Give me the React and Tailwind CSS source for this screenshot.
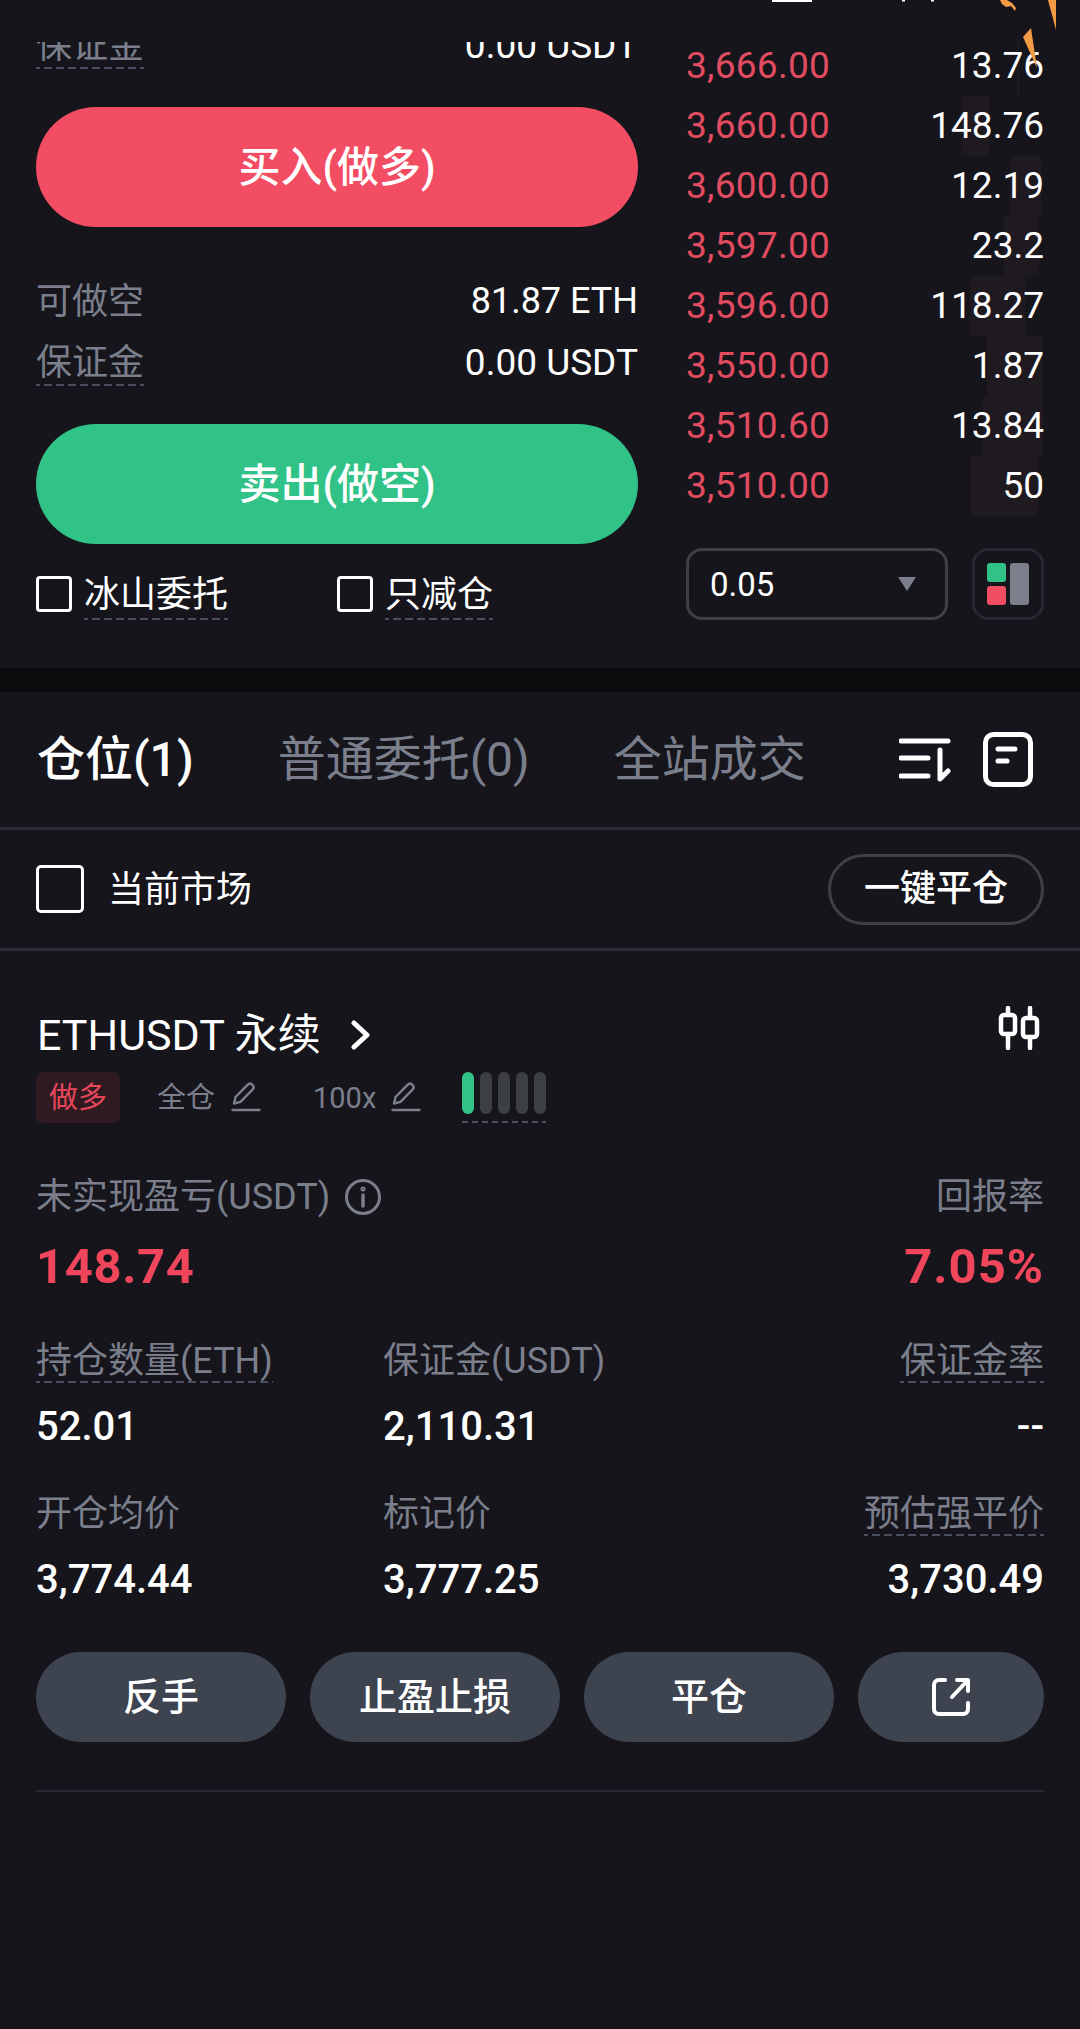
const CJK = "font-['Roboto','Noto_Sans_CJK_SC',sans-serif]";

const asks = [
  { price: "3,666.00", size: "13.76", bar: "w-[2px] mr-[25px]" },
  { price: "3,660.00", size: "148.76", bar: "w-[28px] mr-[55px]" },
  { price: "3,600.00", size: "12.19", bar: "w-[31px] mr-[3px]" },
  { price: "3,597.00", size: "23.2", bar: "w-[35px] mr-[5px]" },
  { price: "3,596.00", size: "118.27", bar: "w-[55px] mr-[19px]" },
  { price: "3,550.00", size: "1.87", bar: "w-[56px] mr-[1px]" },
  { price: "3,510.60", size: "13.84", bar: "w-[60px] mr-[1px]" },
  { price: "3,510.00", size: "50", bar: "w-[67px] mr-[6px]" },
];

function Dashed({ children, className = "" }) {
  return (
    <span className={`inline-block bg-[repeating-linear-gradient(to_right,#4a4f60_0,#4a4f60_4px,transparent_4px,transparent_8px,#4a4f60_8px,#4a4f60_12px)] bg-[length:100%_2px] bg-bottom bg-no-repeat ${className}`}>
      {children}
    </span>
  );
}

function Pencil() {
  return (
    <svg width="30" height="30" viewBox="0 0 30 30" fill="none" stroke="#7b7f8c" strokeWidth="2.4" strokeLinecap="round" strokeLinejoin="round">
      <path d="M3 21.5 L4.5 15 L16.5 2.8 C18 1.4 20 1.4 21.5 2.8 C23 4.2 23 6.2 21.5 7.7 L9.5 19.8 Z" />
      <path d="M1.5 28 H28.5" />
    </svg>
  );
}

function Stat({ label, value, dashed, align = "left" }) {
  return (
    <div className={`flex flex-col ${align === "right" ? "items-end" : "items-start"}`}>
      <div className="h-[46px] text-[36px] leading-[46px] text-[#7b7f8c]">
        {dashed ? <Dashed className="h-[45px] leading-[46px]">{label}</Dashed> : label}
      </div>
      <div className="mt-[20px] h-[46px] text-[40px] leading-[46px] font-medium text-white">{value}</div>
    </div>
  );
}

function ActionButton({ children, className = "" }) {
  return (
    <button className={`flex h-[90px] items-center justify-center rounded-full bg-[#3e4350] text-[38px] font-medium text-white ${className}`}>
      {children}
    </button>
  );
}

export default function App() {
  return (
    <div className={`relative h-[2029px] w-[1080px] overflow-hidden bg-[#16151c] ${CJK}`}>
      {/* bits of the chart's marker and toolbar that show above the scrolled panel */}
      <svg className="absolute left-0 top-0" width="1080" height="72" viewBox="0 0 1080 72">
        <rect x="772" y="0" width="40" height="2" fill="#fff" />
        <rect x="902" y="0" width="3" height="1.5" fill="#fff" />
        <rect x="931" y="0" width="3" height="1.5" fill="#fff" />
        <path d="M1000 0 L1007 0 L1012 3 L1016 8 L1015 11 L1011 6 L1006 7 L1002 4 Z" fill="#f39a44" />
        <path d="M1048 0 L1056 0 L1056 30 Z" fill="#f39a44" />
      </svg>

      <div className="flex h-[668px] px-[36px]">
        <div className="flex w-[602px] flex-col">
          <div className="relative mt-[42px] h-[30px] overflow-hidden text-[36px] text-[#7b7f8c]">
            <div className="absolute inset-x-0 top-[-20px] flex items-start justify-between">
              <Dashed className="h-[47px] leading-[48px]">保证金</Dashed>
              <span className="text-[37px] leading-[48px] text-white">0.00 USDT</span>
            </div>
          </div>
          <button className="mt-[35px] h-[120px] shrink-0 rounded-full bg-[#f34d63] text-[42px] font-medium text-white">买入(做多)</button>
          <div className="mt-[50px] flex h-[46px] items-center justify-between text-[36px]">
            <span className="pt-[3px] text-[#7b7f8c]">可做空</span>
            <span className="pt-[1px] text-white">81.87 ETH</span>
          </div>
          <div className="mt-[16px] flex h-[46px] items-start justify-between text-[36px]">
            <Dashed className="h-[47px] leading-[48px] text-[#7b7f8c]">保证金</Dashed>
            <span className="text-[37px] leading-[48px] text-white">0.00 USDT</span>
          </div>
          <button className="mt-[39px] h-[120px] shrink-0 rounded-full bg-[#31c288] text-[42px] font-medium text-white">卖出(做空)</button>
          <div className="mt-[32px] flex h-[44px] items-start text-[36px] text-white">
            <span className="h-[36px] w-[36px] rounded-[4px] border-[3px] border-white" />
            <Dashed className="ml-[12px] h-[44px] leading-[38px]">冰山委托</Dashed>
            <span className="ml-[109px] h-[36px] w-[36px] rounded-[4px] border-[3px] border-white" />
            <Dashed className="ml-[12px] h-[44px] leading-[38px]">只减仓</Dashed>
          </div>
        </div>

        <div className="ml-[48px] flex w-[358px] flex-col pt-[36px]">
          {asks.map((row) => (
            <div key={row.price} className="relative flex h-[60px] items-center justify-between text-[37px]">
              <span className={`absolute right-0 top-0 h-[60px] bg-[#1f1920] ${row.bar}`} />
              <span className="relative tracking-[0.3px] text-[#e24c60]">{row.price}</span>
              <span className="relative text-white">{row.size}</span>
            </div>
          ))}
          <div className="mt-[32px] flex items-start justify-between">
            <div className="flex h-[72px] w-[262px] items-center justify-between rounded-[16px] border-[3px] border-[#3f4045] pl-[21px] pr-[29px] text-[33px] text-white">
              <span className="pt-[1px]">0.05</span>
              <span className="h-[14px] w-[18px] bg-[#7b7f8c] [clip-path:polygon(0_0,100%_0,50%_100%)]" />
            </div>
            <div className="grid h-[72px] w-[72px] grid-cols-[19px_19px] grid-rows-[19px_19px] content-center justify-center gap-[4px] rounded-[16px] border-[3px] border-[#262833]">
              <span className="rounded-[3px] bg-[#31c288]" />
              <span className="row-span-2 rounded-[3px] bg-[#7b7f8c]" />
              <span className="rounded-[3px] bg-[#f34d63]" />
            </div>
          </div>
        </div>
      </div>

      <div className="h-[24px] bg-[#0b0b0d]" />

      <div className="flex h-[138px] items-center border-b-[3px] border-[#2a2b35] px-[36px] text-[48px]">
        <span className="ml-[1px] font-medium text-white">仓位(1)</span>
        <span className="ml-[84px] text-[#7b7f8c]">普通委托(0)</span>
        <span className="ml-[84px] text-[#7b7f8c]">全站成交</span>
        <svg className="ml-[93px]" width="52" height="44" viewBox="0 0 52 44" fill="none" stroke="#fff" strokeWidth="5" strokeLinecap="round" strokeLinejoin="round">
          <path d="M2 3 H49" />
          <path d="M2 20 H29" />
          <path d="M2 38 H29" />
          <path d="M41 12 V41 L49 33" />
        </svg>
        <svg className="ml-[32px]" width="50" height="55" viewBox="0 0 50 55" fill="none" stroke="#fff" strokeWidth="5" strokeLinecap="round">
          <rect x="2.5" y="2.5" width="45" height="50" rx="8" />
          <path d="M15 17 H32" />
          <path d="M15 29 H24" />
        </svg>
      </div>

      <div className="flex h-[121px] items-center justify-between border-b-[3px] border-[#2a2b35] px-[36px]">
        <div className="flex items-center text-[36px] text-white">
          <span className="h-[48px] w-[48px] rounded-[5px] border-[3px] border-white" />
          <span className="ml-[24px] pt-[1px]">当前市场</span>
        </div>
        <button className="flex h-[71px] w-[216px] items-center justify-center rounded-full border-[3px] border-[#3f4045] text-[36px] font-medium text-white">一键平仓</button>
      </div>

      <div className="px-[36px] pt-[55px]">
        <div className="flex items-center justify-between">
          <div className="flex h-[58px] items-center text-[43px] text-white">
            <span className="ml-[1px]">ETHUSDT 永续</span>
            <svg className="ml-[29px]" width="20" height="30" viewBox="0 0 20 30" fill="none" stroke="#fff" strokeWidth="5" strokeLinecap="round" strokeLinejoin="round">
              <path d="M4 3 L17 15 L4 27" />
            </svg>
          </div>
          <svg className="mr-[3px] -mt-[14px]" width="44" height="44" viewBox="0 0 44 44" fill="none" stroke="#fff" strokeWidth="4.5" strokeLinecap="round">
            <rect x="4" y="9" width="14" height="19" rx="3" />
            <rect x="26" y="12" width="14" height="19" rx="3" />
            <path d="M11 2 V9 M11 28 V42 M33 2 V12 M33 31 V42" />
          </svg>
        </div>

        <div className="mt-[7px] flex h-[52px] items-center text-[29px] text-[#7b7f8c]">
          <span className="flex h-[51px] w-[84px] items-center justify-center rounded-[6px] bg-[#2f1a22] pt-[3px] text-[#e8475b]">做多</span>
          <span className="ml-[37px] pt-[4px]">全仓</span>
          <span className="ml-[16px]"><Pencil /></span>
          <span className="ml-[52px] pt-[4px]">100x</span>
          <span className="ml-[15px]"><Pencil /></span>
          <span className="ml-[41px] flex h-[51px] w-[84px] items-start gap-[6px] bg-[repeating-linear-gradient(to_right,#4a4f60_0,#4a4f60_6px,transparent_6px,transparent_10px)] bg-[length:100%_2px] bg-bottom bg-no-repeat">
            <span className="h-[42px] w-[12px] rounded-full bg-[#31c288]" />
            <span className="h-[42px] w-[12px] rounded-full bg-[#3c3f44]" />
            <span className="h-[42px] w-[12px] rounded-full bg-[#3c3f44]" />
            <span className="h-[42px] w-[12px] rounded-full bg-[#3c3f44]" />
            <span className="h-[42px] w-[12px] rounded-full bg-[#3c3f44]" />
          </span>
        </div>

        <div className="mt-[51px] flex justify-between">
          <div>
            <div className="flex h-[46px] items-center text-[36px] text-[#7b7f8c]">
              未实现盈亏(USDT)
              <svg className="ml-[14px]" width="38" height="38" viewBox="0 0 38 38" fill="none" stroke="#7b7f8c" strokeWidth="3" strokeLinecap="round">
                <circle cx="19" cy="19" r="16.5" />
                <path d="M19 17 V28" strokeWidth="3.5" />
                <circle cx="19" cy="11" r="1" strokeWidth="3" />
              </svg>
            </div>
            <div className="mt-[19px] text-[49px] leading-[56px] font-bold tracking-[0.6px] text-[#f0465b]">148.74</div>
          </div>
          <div className="text-right">
            <div className="h-[46px] text-[36px] leading-[46px] text-[#7b7f8c]">回报率</div>
            <div className="mt-[19px] text-[49px] leading-[56px] font-bold tracking-[1px] text-[#f0465b]">7.05%</div>
          </div>
        </div>

        <div className="mt-[43px] grid grid-cols-[347px_1fr_auto] gap-y-[41px]">
          <Stat label="持仓数量(ETH)" value="52.01" dashed />
          <Stat label="保证金(USDT)" value="2,110.31" />
          <Stat label="保证金率" value="--" dashed align="right" />
          <Stat label="开仓均价" value="3,774.44" />
          <Stat label="标记价" value="3,777.25" />
          <Stat label="预估强平价" value="3,730.49" dashed align="right" />
        </div>

        <div className="mt-[49px] flex gap-[24px]">
          <ActionButton className="w-[250px]">反手</ActionButton>
          <ActionButton className="w-[250px]">止盈止损</ActionButton>
          <ActionButton className="w-[250px]">平仓</ActionButton>
          <ActionButton className="w-[186px]">
            <svg width="40" height="40" viewBox="0 0 40 40" fill="none" stroke="#fff" strokeWidth="4" strokeLinecap="round" strokeLinejoin="round">
              <path d="M14 3 H8 C5 3 3 5 3 8 V32 C3 35 5 37 8 37 H32 C35 37 37 35 37 32 V26" />
              <path d="M21 20 L37 3 M26 3 H37 V14" />
            </svg>
          </ActionButton>
        </div>

        <div className="mt-[48px] h-[2px] bg-[#2a2a36]" />
      </div>

      {/* orange marker from the chart that hangs over the order book */}
      <svg className="absolute left-[1020px] top-[26px]" width="20" height="44" viewBox="0 0 20 44">
        <path d="M11 2 L3 11 L17 42 Z" fill="#f39a44" />
      </svg>
    </div>
  );
}
